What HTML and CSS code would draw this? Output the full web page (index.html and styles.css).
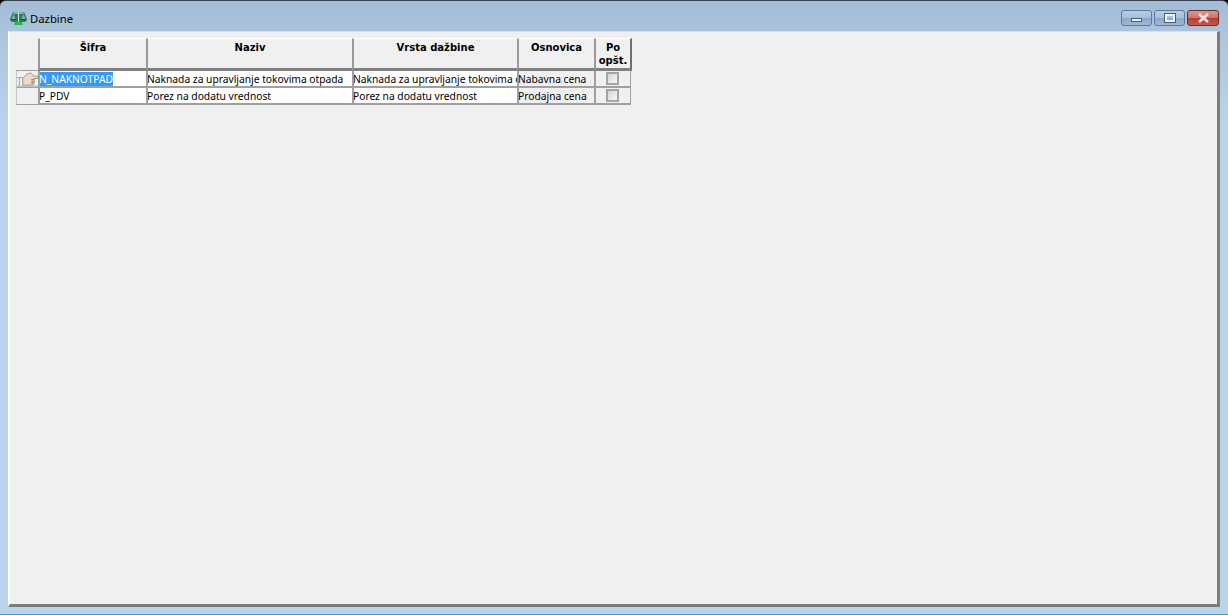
FILE: index.html
```html
<!DOCTYPE html>
<html>
  <head>
    <title>Dazbine</title>
    <link rel="stylesheet" href="styles.css">
  </head>
  <body>
    <div class="window">
      <div class="titlebar">
        <svg class="app-icon" width="17" height="14" viewBox="0 0 17 14">
          <path d="M3 1h11l3 7c0 2-1 3-3 3H3C1 11 0 10 0 8z" fill="#2c7a63"/>
          <path d="M8.500 1v10M3.500 2h10" stroke="#cfe8dc" stroke-width="1" fill="none"/>
          <path d="M3.500 3L1.500 8h4zM13.500 3l-2 5h4z" fill="#7fb8a0"/>
          <path d="M1 8.500h5M11 8.500h5" stroke="#14503e" fill="none"/>
          <path d="M5 11h7l1 3H4z" fill="#25b84a"/>
        </svg>
        <span class="title">Dazbine</span>
        <div class="buttons">
          <div class="btn"><span class="min-glyph"></span></div>
          <div class="btn"><span class="max-glyph"></span></div>
          <div class="btn close">
            <svg width="13" height="10" viewBox="0 0 13 10">
              <path d="M2 1l9 8M11 1L2 9" stroke="#f0e6e6" stroke-width="2.600" fill="none"/>
            </svg>
          </div>
        </div>
      </div>
      <div class="client">
        <div class="grid">
          <div class="corner"></div>
          <div class="head">Šifra</div>
          <div class="head">Naziv</div>
          <div class="head">Vrsta dažbine</div>
          <div class="head">Osnovica</div>
          <div class="head last">Po<br>opšt.</div>

          <div class="marker">
            <svg width="22" height="17" viewBox="0 0 22 17">
              <path d="M0 7.500h6M0 16.500h22M2.500 8v8M6.500 8v8" stroke="#8fa6c8" fill="none"/>
              <path d="M6 15V8.500L9 5l3-2h3l2 2v1h5v2.500h-4V14l-2 1.500H8z" fill="#e6dcc0" stroke="#8a8068" stroke-width="0.700"/>
              <path d="M15 9h3v1.300h-3zM15 11h3v1.300h-3zM15 13h2v1.300h-2z" fill="#b08a50"/>
            </svg>
          </div>
          <div class="cell"><span class="selected">N_NAKNOTPAD</span></div>
          <div class="cell">Naknada za upravljanje tokovima otpada</div>
          <div class="cell">Naknada za upravljanje tokovima otpada</div>
          <div class="cell grey">Nabavna cena</div>
          <div class="cell grey check"><span class="checkbox"></span></div>

          <div class="marker"></div>
          <div class="cell">P_PDV</div>
          <div class="cell">Porez na dodatu vrednost</div>
          <div class="cell">Porez na dodatu vrednost</div>
          <div class="cell grey">Prodajna cena</div>
          <div class="cell grey check"><span class="checkbox"></span></div>
        </div>
      </div>
    </div>
  </body>
</html>
```

FILE: styles.css
```css
html,
body {
  margin: 0;
  height: 100%;
  overflow: hidden;
  background: #000;
}

.window {
  height: 615px;
  box-sizing: border-box;
  display: flex;
  flex-direction: column;
  padding: 0 8px 7px 8px;
  border-radius: 6px 6px 0 0;
  border-top: 1px solid #3a4450;
  border-bottom: 1px solid #2fa9b5;
  background: linear-gradient(to bottom, #a3bbd4 0, #aec6de 40px, #b9d3ec 120px, #b9d3ec 100%);
  font-family: "Noto Sans", Arial, sans-serif;
}

.titlebar {
  height: 30px;
  flex: none;
  display: flex;
  align-items: center;
  padding-top: 4px;
  box-sizing: border-box;
}

.app-icon {
  margin-left: 2px;
  margin-top: -1px;
}

.title {
  margin-left: 3px;
  font-size: 11.300px;
  color: #000;
}

.buttons {
  margin-left: auto;
  margin-top: -1px;
  margin-right: 1px;
  display: flex;
  gap: 2px;
}

.btn {
  width: 29px;
  height: 14px;
  border: 1px solid #5d7a9c;
  border-radius: 3px;
  display: flex;
  align-items: center;
  justify-content: center;
  background: linear-gradient(to bottom, #b7cde4 0, #a5bfd9 50%, #8aa8c8 51%, #9db9d6 100%);
}

.close {
  width: 30px;
  border-color: #6b2a2a;
  background: linear-gradient(to bottom, #dc9a90 0, #cf7064 50%, #b83c2e 51%, #c65a4c 100%);
}

.min-glyph {
  width: 9px;
  height: 2px;
  margin-top: 4px;
  border: 1px solid #4a5e78;
  background: #e8eef5;
}

.max-glyph {
  width: 6px;
  height: 4px;
  border: 2px solid #eef3f8;
  outline: 1px solid #4a5e78;
}

.client {
  flex: 1;
  background: #f0f0f0;
  border-top: 1px solid #d8e0e8;
  border-left: 2px solid #fafafa;
  border-right: 3px solid #7d7d7d;
  border-bottom: 3px solid #7d7d7d;
  padding: 6px 0 0 6px;
}

.grid {
  display: grid;
  grid-template-columns: 22px 108px 206px 165px 77px 38px;
  grid-template-rows: 33px 17px 17px;
  width: max-content;
  font-family: "Noto Sans", Arial, sans-serif;
  font-size: 10.250px;
  color: #000;
}

.corner {
  background: #f0f0f0;
  border-bottom: 1px solid #a0a0a0;
}

.head {
  box-sizing: border-box;
  background: #f0f0f0;
  border-left: 2px solid #9a9a9a;
  border-top: 1px solid #fff;
  border-bottom: 3px solid #808080;
  text-align: center;
  font-family: "DejaVu Sans", sans-serif;
  font-size: 10px;
  font-weight: bold;
  line-height: 13px;
  padding-top: 2px;
}

.last {
  border-right: 2px solid #707070;
}

.marker {
  box-sizing: border-box;
  background: #f0f0f0;
  border-left: 1px solid #c8c8c8;
  border-bottom: 1px solid #a0a0a0;
  display: flex;
  align-items: flex-end;
  overflow: hidden;
}

.cell {
  box-sizing: border-box;
  background: #fff;
  border-left: 2px solid #a0a0a0;
  border-bottom: 2px solid #a0a0a0;
  line-height: 16px;
  text-indent: -1px;
  white-space: nowrap;
  overflow: hidden;
}

.grey {
  background: #f0f0f0;
}

.grey.check {
  border-right: 1px solid #a0a0a0;
  margin-right: 1px;
}

.selected {
  display: inline-block;
  background: #3399ff;
  color: #fff;
  line-height: 14px;
  margin-top: 1px;
  text-indent: 0;
}

.check {
  display: flex;
  justify-content: center;
  padding-top: 1px;
}

.checkbox {
  width: 9px;
  height: 9px;
  margin-right: 1px;
  border: 2px solid #a4a4a4;
  background: linear-gradient(135deg, #d4d4d4, #f8f8f8);
}
```
